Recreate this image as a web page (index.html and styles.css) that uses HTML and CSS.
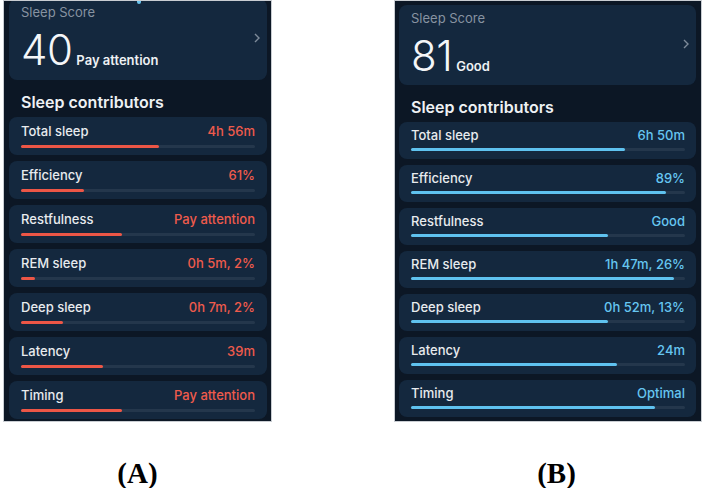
FILE: index.html
```html
<!DOCTYPE html>
<html lang="en">
  <head>
    <meta charset="UTF-8" />
    <meta name="viewport" content="width=device-width, initial-scale=1.0" />
    <title>Sleep contributors</title>
    <link rel="stylesheet" href="styles.css">
  </head>
  <body>
    <div class="figure">
      <!-- (A) low score -->
      <div class="column column-a">
        <div class="panel panel-a">
          <span class="marker"></span>
          <div class="score-card">
            <div class="score-body">
              <div class="score-title">Sleep Score</div>
              <div class="score-line">
                <span class="score-number">40</span>
                <span class="score-word">Pay attention</span>
              </div>
            </div>
            <svg class="chevron" width="6" height="10" viewBox="0 0 6 10"><polyline points="1,1 5,5 1,9" /></svg>
          </div>
          <h2>Sleep contributors</h2>
          <div class="rows bad">
            <div class="row">
              <div class="row-top"><span>Total sleep</span><span class="value">4h 56m</span></div>
              <div class="track"><div class="fill" style="width: 59%"></div></div>
            </div>
            <div class="row">
              <div class="row-top"><span>Efficiency</span><span class="value">61%</span></div>
              <div class="track"><div class="fill" style="width: 27%"></div></div>
            </div>
            <div class="row">
              <div class="row-top"><span>Restfulness</span><span class="value">Pay attention</span></div>
              <div class="track"><div class="fill" style="width: 43%"></div></div>
            </div>
            <div class="row">
              <div class="row-top"><span>REM sleep</span><span class="value">0h 5m, 2%</span></div>
              <div class="track"><div class="fill" style="width: 6%"></div></div>
            </div>
            <div class="row">
              <div class="row-top"><span>Deep sleep</span><span class="value">0h 7m, 2%</span></div>
              <div class="track"><div class="fill" style="width: 18%"></div></div>
            </div>
            <div class="row">
              <div class="row-top"><span>Latency</span><span class="value">39m</span></div>
              <div class="track"><div class="fill" style="width: 35%"></div></div>
            </div>
            <div class="row">
              <div class="row-top"><span>Timing</span><span class="value">Pay attention</span></div>
              <div class="track"><div class="fill" style="width: 43%"></div></div>
            </div>
          </div>
        </div>
        <div class="caption">(A)</div>
      </div>

      <!-- (B) good score -->
      <div class="column column-b">
        <div class="panel panel-b">
          <div class="score-card">
            <div class="score-body">
              <div class="score-title">Sleep Score</div>
              <div class="score-line">
                <span class="score-number">81</span>
                <span class="score-word">Good</span>
              </div>
            </div>
            <svg class="chevron" width="6" height="10" viewBox="0 0 6 10"><polyline points="1,1 5,5 1,9" /></svg>
          </div>
          <h2>Sleep contributors</h2>
          <div class="rows good">
            <div class="row">
              <div class="row-top"><span>Total sleep</span><span class="value">6h 50m</span></div>
              <div class="track"><div class="fill" style="width: 78%"></div></div>
            </div>
            <div class="row">
              <div class="row-top"><span>Efficiency</span><span class="value">89%</span></div>
              <div class="track"><div class="fill" style="width: 93%"></div></div>
            </div>
            <div class="row">
              <div class="row-top"><span>Restfulness</span><span class="value">Good</span></div>
              <div class="track"><div class="fill" style="width: 72%"></div></div>
            </div>
            <div class="row">
              <div class="row-top"><span>REM sleep</span><span class="value">1h 47m, 26%</span></div>
              <div class="track"><div class="fill" style="width: 96%"></div></div>
            </div>
            <div class="row">
              <div class="row-top"><span>Deep sleep</span><span class="value">0h 52m, 13%</span></div>
              <div class="track"><div class="fill" style="width: 72%"></div></div>
            </div>
            <div class="row">
              <div class="row-top"><span>Latency</span><span class="value">24m</span></div>
              <div class="track"><div class="fill" style="width: 75%"></div></div>
            </div>
            <div class="row">
              <div class="row-top"><span>Timing</span><span class="value">Optimal</span></div>
              <div class="track"><div class="fill" style="width: 89%"></div></div>
            </div>
          </div>
        </div>
        <div class="caption">(B)</div>
      </div>
    </div>
  </body>
</html>
```

FILE: styles.css
```css
body {
  margin: 0;
  background-color: #fff;
  font-family: Inter, "Noto Sans", sans-serif;
}

.figure {
  display: flex;
  gap: 122px;
  padding-left: 3px;
}

.column {
  display: flex;
  flex-direction: column;
  align-items: center;
}
.column-a {
  width: 269px;
}
.column-b {
  width: 308px;
}

/* The phone screenshot */
.panel {
  position: relative;
  box-sizing: border-box;
  width: 100%;
  height: 422px;
  overflow: hidden;
  background: #0c1725;
  border: 1px solid #c9cdd2;
  border-top-width: 1px;
}
.panel-a {
  padding: 0 4px 0 5px;
}
.panel-b {
  padding: 4px 5px 0 4px;
}

/* small blue tick left over from the chart above */
.marker {
  position: absolute;
  top: 0;
  left: 133px;
  width: 4px;
  height: 3px;
  background: #6cc6f0;
  border-radius: 0 0 2px 2px;
}

.score-card {
  display: flex;
  align-items: center;
  padding: 6px 7px 9px 12px;
  background: #14283e;
  border-radius: 8px;
}
.panel-a .score-card {
  margin-top: -2px;
}
.panel-b .score-card {
  padding-bottom: 8px;
}
.score-body {
  flex: 1;
}
.score-title {
  font-size: 13px;
  line-height: 15px;
  color: #8793a1;
}
.score-line {
  display: flex;
  align-items: baseline;
  gap: 4px;
  margin-top: 9px;
}
.score-number {
  font-size: 42px;
  line-height: 42px;
  font-weight: 300;
  color: #f4f6f8;
  letter-spacing: -0.5px;
}
.score-word {
  font-size: 13px;
  font-weight: 600;
  color: #eef1f4;
}
.chevron polyline {
  fill: none;
  stroke: #7e8b9a;
  stroke-width: 1.4;
}

h2 {
  margin: 12px 0 5px 12px;
  font-size: 16px;
  line-height: 20px;
  font-weight: 600;
  color: #eef1f4;
}

.rows {
  display: flex;
  flex-direction: column;
  gap: 6px;
}
.row {
  padding: 7px 12px;
  background: #14283e;
  border-radius: 8px;
}
.panel-b .row {
  padding: 6px 11px 8px 12px;
}
.row-top {
  display: flex;
  justify-content: space-between;
  font-size: 13px;
  line-height: 15px;
  font-weight: 500;
  color: #e8ebee;
}
.track {
  height: 3px;
  margin-top: 6px;
  background: #24374c;
  border-radius: 2px;
}
.panel-b .track {
  margin-top: 5px;
}
.fill {
  height: 100%;
  border-radius: 2px;
}
.bad .value {
  color: #ef5b4c;
}
.bad .fill {
  background: #ec5646;
}
.good .value {
  color: #66c6f1;
}
.good .fill {
  background: #5fc2ef;
}

.caption {
  margin-top: 37px;
  font-family: "Liberation Serif", serif;
  font-size: 29px;
  line-height: 29px;
  font-weight: bold;
  color: #000;
}
.column-b .caption {
  padding-left: 17px;
}
```
